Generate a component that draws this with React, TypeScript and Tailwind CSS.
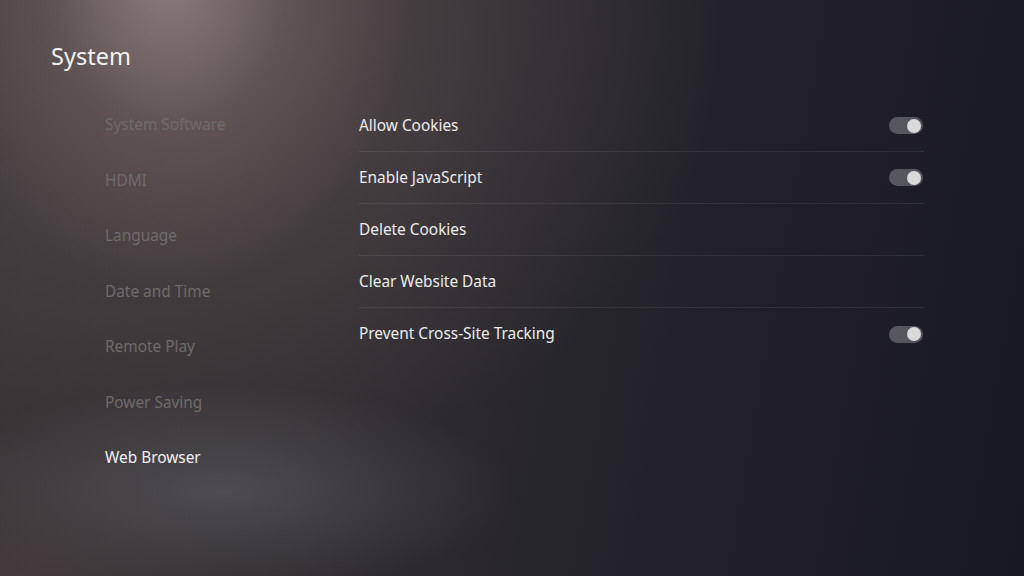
const menu = [
  'System Software',
  'HDMI',
  'Language',
  'Date and Time',
  'Remote Play',
  'Power Saving',
  'Web Browser',
];

const settings = [
  { label: 'Allow Cookies', toggle: true },
  { label: 'Enable JavaScript', toggle: true },
  { label: 'Delete Cookies', toggle: false },
  { label: 'Clear Website Data', toggle: false },
  { label: 'Prevent Cross-Site Tracking', toggle: true },
];

const Toggle = () => (
  <div className="w-[34px] h-[17px] rounded-full bg-[#56565e] flex items-center justify-end pr-[2px]">
    <div className="w-[14px] h-[14px] rounded-full bg-[#d9d9dc]" />
  </div>
);

export default function App() {
  return (
    <div className="relative w-[1024px] h-[576px] overflow-hidden bg-[linear-gradient(100deg,#3a3537_0%,#322e32_35%,#23222a_65%,#181822_100%)] font-['Noto_Sans',sans-serif]">
      {/* background light */}
      <div className="absolute inset-0 bg-[radial-gradient(ellipse_240px_320px_at_170px_-30px,rgba(185,165,162,0.75),rgba(135,116,114,0.32)_50%,transparent_100%)]" />
      <div className="absolute inset-0 bg-[radial-gradient(ellipse_500px_440px_at_220px_30px,rgba(125,108,108,0.42),transparent_100%)]" />
      <div className="absolute inset-0 bg-[radial-gradient(ellipse_290px_105px_at_220px_490px,rgba(100,100,106,0.55),transparent_100%)]" />
      <div className="absolute inset-0 bg-[radial-gradient(ellipse_200px_140px_at_20px_576px,rgba(80,66,70,0.45),transparent_100%)]" />

      <div className="relative flex flex-col pl-[51px] pt-[40px]">
        <h1 className="text-[23.5px] leading-[32px] text-[#f2f2f2]">System</h1>

        <div className="flex items-start mt-[25px]">
          <nav className="w-[308px] pl-[54px] flex flex-col">
            {menu.map((m) => (
              <div
                key={m}
                className={`h-[55.5px] flex items-center text-[15.4px] ${
                  m === 'Web Browser' ? 'text-[#f0f0f0]' : 'text-[#6f6a6b]'
                }`}
              >
                {m}
              </div>
            ))}
          </nav>

          <div className="w-[565px] pt-[3px] flex flex-col">
            {settings.map((s, i) => (
              <div
                key={s.label}
                className={`h-[52px] flex items-center justify-between pr-[1px] ${
                  i < settings.length - 1 ? 'border-b border-[rgba(255,255,255,0.07)]' : ''
                }`}
              >
                <span className="text-[15.4px] text-[#ececec]">{s.label}</span>
                {s.toggle && <Toggle />}
              </div>
            ))}
          </div>
        </div>
      </div>
    </div>
  );
}
